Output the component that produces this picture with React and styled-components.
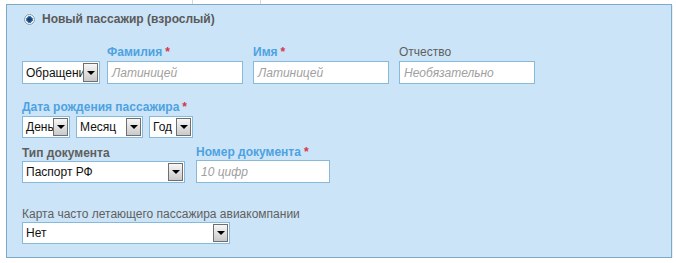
import React from "react";
import styled, { createGlobalStyle } from "styled-components";

const Global = createGlobalStyle`
  html, body { margin: 0; padding: 0; background: #fff; }
  body { font-family: "Liberation Sans", Arial, sans-serif; font-size: 12px; }
`;

const TopStrip = styled.div`
  height: 4px;
  display: flex;
`;

const TopTab = styled.div`
  margin-left: 192px;
  width: 67px;
  border-left: 1px solid #d6d6d6;
  border-right: 1px solid #d6d6d6;
`;

const Panel = styled.div`
  margin-left: 6px;
  width: 666px;
  height: 254px;
  box-sizing: border-box;
  border: 1px solid #7eaac8;
  background: #cce4f7;
  padding: 7px 15px 0;
  box-shadow: 1px 1px 0 #e3f1fb;
  display: flex;
  flex-direction: column;
`;

const RadioRow = styled.label`
  display: flex;
  align-items: center;
  gap: 7px;
  height: 14px;
  padding-left: 2px;
  font-weight: bold;
  color: #5a5a5a;
  font-size: 12px;
`;

const Radio = styled.span`
  width: 11px;
  height: 11px;
  border-radius: 50%;
  box-sizing: border-box;
  border: 1px solid #8a9aa8;
  background: radial-gradient(circle, #1d3d6a 0 2px, #3d7fc4 2.5px 3.2px, #f0f4f8 3.6px);
  box-shadow: 0 0 1px #fff;
`;

const Section = styled.div`
  display: flex;
  align-items: flex-end;
  gap: ${(p) => p.$gap || 10}px;
  margin-top: ${(p) => p.$mt}px;
`;

const Field = styled.div`
  display: flex;
  flex-direction: column;
  gap: ${(p) => p.$gap ?? 2}px;
`;

const Label = styled.div`
  height: 14px;
  line-height: 14px;
  font-size: 12px;
  color: ${(p) => (p.$accent ? "#4da2e2" : "#5f5f5f")};
  font-weight: ${(p) => (p.$bold || p.$accent ? "bold" : "normal")};
  white-space: nowrap;
`;

const Star = styled.span`
  color: #d8334d;
  margin-left: 3px;
`;

const Input = styled.div`
  width: ${(p) => p.$w}px;
  height: 23px;
  box-sizing: border-box;
  border: 1px solid #87b9da;
  background: #fff;
  padding-left: 4px;
  display: flex;
  align-items: center;
  font-style: italic;
  color: #a0a0a0;
  font-size: 12px;
`;

const SelectBox = styled.div`
  width: ${(p) => p.$w}px;
  height: ${(p) => p.$h || 22}px;
  box-sizing: border-box;
  border: 1px solid #87b9da;
  background: #fff;
  display: flex;
  align-items: center;
  padding: 1px;
  overflow: hidden;
`;

const SelectText = styled.span`
  flex: 1;
  min-width: 0;
  padding-left: 2px;
  color: #111;
  font-size: 12px;
  white-space: nowrap;
  overflow: hidden;
`;

const ArrowBtn = styled.span`
  flex: none;
  width: 15px;
  height: 100%;
  box-sizing: border-box;
  border: 1px solid #6f6f6f;
  background: linear-gradient(#f7f7f7, #c9c9c9);
  display: flex;
  align-items: center;
  justify-content: center;
`;

const Tri = styled.span`
  width: 0;
  height: 0;
  border-left: 4px solid transparent;
  border-right: 4px solid transparent;
  border-top: 4px solid #000;
`;

const Select = ({ w, h, children }) => (
  <SelectBox $w={w} $h={h}>
    <SelectText>{children}</SelectText>
    <ArrowBtn>
      <Tri />
    </ArrowBtn>
  </SelectBox>
);

export default function App() {
  return (
    <>
      <Global />
      <TopStrip>
        <TopTab />
      </TopStrip>
      <Panel>
        <RadioRow>
          <Radio />
          Новый пассажир (взрослый)
        </RadioRow>

        <Section $mt={19} $gap={7}>
          <Select w={78} h={23}>Обращение</Select>
          <Section $mt={0} $gap={10}>
            <Field>
              <Label $accent>
                Фамилия<Star>*</Star>
              </Label>
              <Input $w={136}>Латиницей</Input>
            </Field>
            <Field>
              <Label $accent>
                Имя<Star>*</Star>
              </Label>
              <Input $w={136}>Латиницей</Input>
            </Field>
            <Field>
              <Label>Отчество</Label>
              <Input $w={136}>Необязательно</Input>
            </Field>
          </Section>
        </Section>

        <Section $mt={16}>
          <Field $gap={2}>
            <Label $accent>
              Дата рождения пассажира<Star>*</Star>
            </Label>
            <Section $mt={0} $gap={6}>
              <Select w={48}>День</Select>
              <Select w={67}>Месяц</Select>
              <Select w={44}>Год</Select>
            </Section>
          </Field>
        </Section>

        <Section $mt={7} $gap={11}>
          <Field $gap={1}>
            <Label $bold>Тип документа</Label>
            <Select w={163}>Паспорт РФ</Select>
          </Field>
          <Field $gap={1}>
            <Label $accent>
              Номер документа<Star>*</Star>
            </Label>
            <Input $w={134}>10 цифр</Input>
          </Field>
        </Section>

        <Section $mt={24}>
          <Field $gap={1}>
            <Label>Карта часто летающего пассажира авиакомпании</Label>
            <Select w={208}>Нет</Select>
          </Field>
        </Section>
      </Panel>
    </>
  );
}
